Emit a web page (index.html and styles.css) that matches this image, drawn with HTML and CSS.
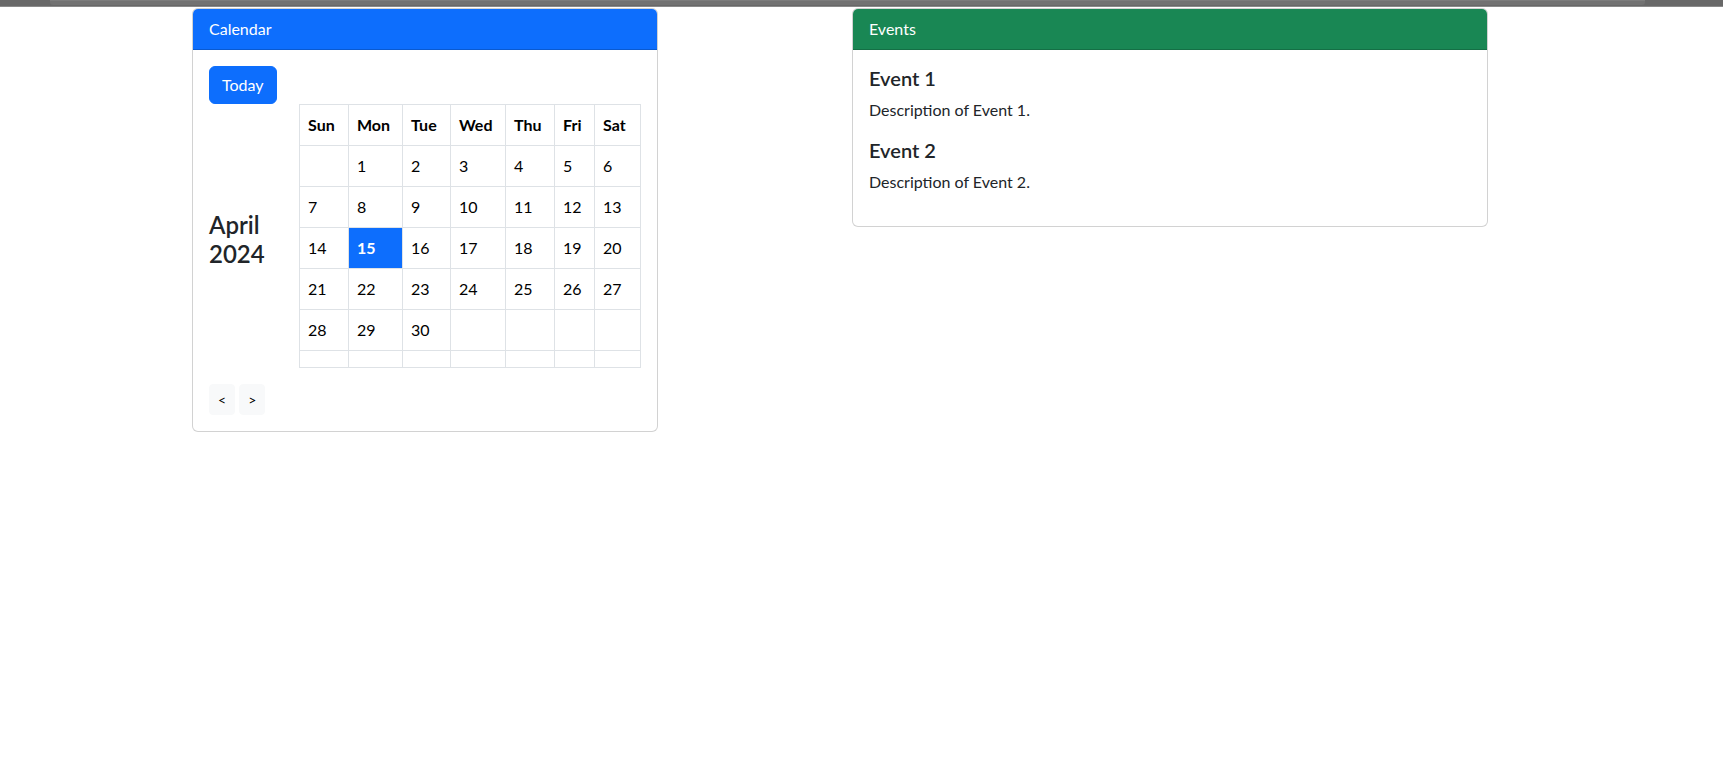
FILE: index.html
```html
<!DOCTYPE html>
<html lang="en">
<head>
<meta charset="utf-8">
<title>Calendar</title>
<link rel="stylesheet" href="styles.css">
</head>
<body>
<div class="topbar"><div class="thumb"></div></div>
<main class="page">
  <section class="card card-cal">
    <div class="card-header hdr-blue">Calendar</div>
    <div class="card-body">
      <button class="btn btn-primary">Today</button>
      <div class="cal-row">
        <h4 class="month">April<br>2024</h4>
        <table class="cal">
          <colgroup>
            <col class="w1"><col class="w2"><col class="w3"><col class="w4"><col class="w5"><col class="w6"><col class="w7">
          </colgroup>
          <thead>
            <tr><th>Sun</th><th>Mon</th><th>Tue</th><th>Wed</th><th>Thu</th><th>Fri</th><th>Sat</th></tr>
          </thead>
          <tbody>
            <tr><td></td><td>1</td><td>2</td><td>3</td><td>4</td><td>5</td><td>6</td></tr>
            <tr><td>7</td><td>8</td><td>9</td><td>10</td><td>11</td><td>12</td><td>13</td></tr>
            <tr><td>14</td><td class="today">15</td><td>16</td><td>17</td><td>18</td><td>19</td><td>20</td></tr>
            <tr><td>21</td><td>22</td><td>23</td><td>24</td><td>25</td><td>26</td><td>27</td></tr>
            <tr><td>28</td><td>29</td><td>30</td><td></td><td></td><td></td><td></td></tr>
            <tr><td></td><td></td><td></td><td></td><td></td><td></td><td></td></tr>
          </tbody>
        </table>
      </div>
      <div class="nav">
        <button class="btn btn-light">&lt;</button>
        <button class="btn btn-light">&gt;</button>
      </div>
    </div>
  </section>
  <section class="card card-events">
    <div class="card-header hdr-green">Events</div>
    <div class="card-body">
      <h5 class="ev-title">Event 1</h5>
      <p class="ev-desc">Description of Event 1.</p>
      <h5 class="ev-title">Event 2</h5>
      <p class="ev-desc">Description of Event 2.</p>
    </div>
  </section>
</main>
</body>
</html>
```

FILE: styles.css
```css
* { box-sizing: border-box; }
html, body { margin: 0; padding: 0; background: #fff; }
body {
  font-family: Lato, "Open Sans", sans-serif;
  font-size: 16px;
  line-height: 1.5;
  color: #212529;
}
.topbar {
  height: 7px;
  background: #686868;
  border-bottom: 1px solid #8a8a8a;
  padding: 0 78px 0 50px;
}
.thumb {
  height: 5px;
  background: #727272;
  border-top: 1px solid #7c7c7c;
  border-radius: 0 0 3px 3px;
}
.page {
  display: flex;
  align-items: flex-start;
  gap: 194px;
  padding: 1px 0 0 192px;
}
.card {
  border: 1px solid rgba(0, 0, 0, 0.175);
  border-radius: 6px;
  background: #fff;
  overflow: hidden;
}
.card-cal { width: 466px; }
.card-events { width: 636px; }
.card-header {
  padding: 8px 16px;
  color: #fff;
  border-bottom: 1px solid rgba(0, 0, 0, 0.175);
  line-height: 24px;
}
.hdr-blue { background: #0d6efd; }
.hdr-green { background: #198754; }
.card-body { padding: 16px; }
.btn {
  font-family: inherit;
  display: inline-block;
  border: 1px solid transparent;
  cursor: pointer;
}
.btn-primary {
  background: #0d6efd;
  border-color: #0d6efd;
  color: #fff;
  font-size: 16px;
  line-height: 24px;
  padding: 6px 12px;
  border-radius: 6px;
}
.cal-row {
  display: flex;
  align-items: center;
}
.month {
  flex: 0 0 90px;
  margin: 0 0 8px;
  font-size: 24px;
  font-weight: 600;
  line-height: 1.2;
  color: #212529;
}
.cal {
  border-collapse: collapse;
  table-layout: fixed;
  width: 341px;
  margin-bottom: 16px;
  color: #000;
}
.w1 { width: 49px; }
.w2 { width: 54px; }
.w3 { width: 48px; }
.w4 { width: 55px; }
.w5 { width: 49px; }
.w6 { width: 40px; }
.w7 { width: 46px; }
.cal th, .cal td {
  border: 1px solid #dee2e6;
  padding: 8px;
  line-height: 24px;
  text-align: left;
  vertical-align: top;
  white-space: nowrap;
}
.cal th { font-weight: 700; }
.cal td.today {
  background: #0d6efd;
  color: #fff;
  font-weight: 700;
}
.nav {
  display: flex;
  gap: 4px;
}
.btn-light {
  background: #f8f9fa;
  border-color: #f8f9fa;
  color: #000;
  font-size: 14px;
  line-height: 21px;
  padding: 4px 8px;
  border-radius: 4px;
}
.ev-title {
  margin: 0 0 8px;
  font-size: 20px;
  font-weight: 600;
  line-height: 1.2;
}
.ev-desc {
  margin: 0 0 16px;
}
```
